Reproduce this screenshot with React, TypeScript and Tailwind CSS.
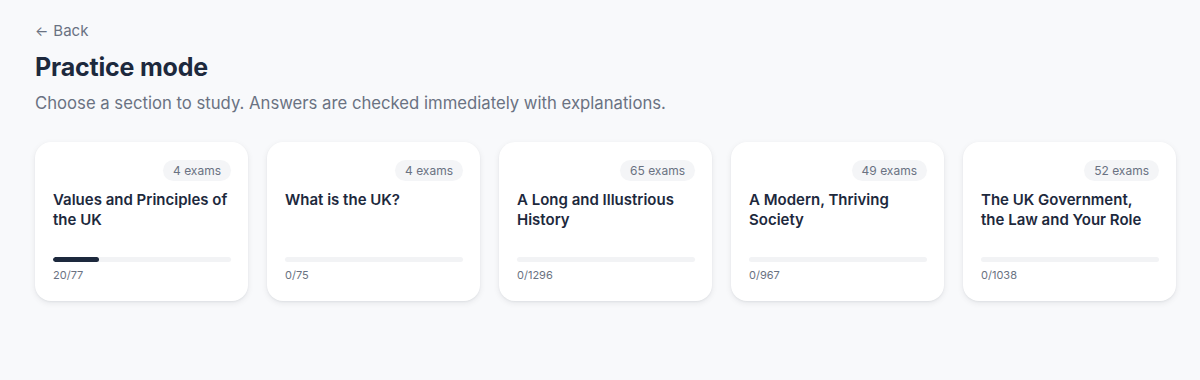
import React from 'react';

type Section = {
    title: string,
    exams: number,
    done: number,
    total: number
}

const sections: Section[] = [
    { title: 'Values and Principles of the UK', exams: 4, done: 20, total: 77 },
    { title: 'What is the UK?', exams: 4, done: 0, total: 75 },
    { title: 'A Long and Illustrious History', exams: 65, done: 0, total: 1296 },
    { title: 'A Modern, Thriving Society', exams: 49, done: 0, total: 967 },
    { title: 'The UK Government, the Law and Your Role', exams: 52, done: 0, total: 1038 },
];

const SectionCard = ({ section }: { section: Section }) => {
    const pct = section.total ? (section.done / section.total) * 100 : 0;

    return (
        <div className="bg-white rounded-2xl shadow-[0_2px_6px_rgba(15,23,42,0.08),0_1px_2px_rgba(15,23,42,0.05)] pl-[18px] pr-[17px] pt-[18px] pb-[19px] h-[159px] flex flex-col">
            <div className="flex justify-end">
                <span className="bg-[#f4f5f7] rounded-full px-[10px] h-[21px] flex items-center text-[12px] text-gray-500">
                    {section.exams} exams
                </span>
            </div>
            <h3 className="mt-[9px] text-[15px] leading-[20px] font-semibold text-slate-800">
                {section.title}
            </h3>
            <div className="mt-auto h-[5px] w-full rounded-full bg-[#f2f3f5] overflow-hidden">
                <div className="h-full rounded-full bg-slate-800" style={{ width: `${pct}%` }} />
            </div>
            <div className="mt-[6px] text-[11px] leading-[14px] text-gray-500">
                {section.done}/{section.total}
            </div>
        </div>
    );
};

const App = () => {
    return (
        <div className="min-h-[380px] bg-[#f8f9fb] pl-[35px] pr-[24px] pt-[21px] font-['Inter',sans-serif]">
            <button className="flex items-center gap-[5px] text-[15px] leading-[20px] text-gray-500">
                <span className="text-[14px]">←</span>
                <span>Back</span>
            </button>
            <h1 className="mt-[10px] text-[25px] leading-[32px] font-bold text-slate-800 tracking-[-0.2px]">
                Practice mode
            </h1>
            <p className="mt-[8px] text-[16.7px] leading-[24px] text-gray-500">
                Choose a section to study. Answers are checked immediately with explanations.
            </p>
            <div className="mt-[27px] grid grid-cols-5 gap-[19px]">
                {sections.map((s) => (
                    <SectionCard key={s.title} section={s} />
                ))}
            </div>
        </div>
    );
};

export default App;
